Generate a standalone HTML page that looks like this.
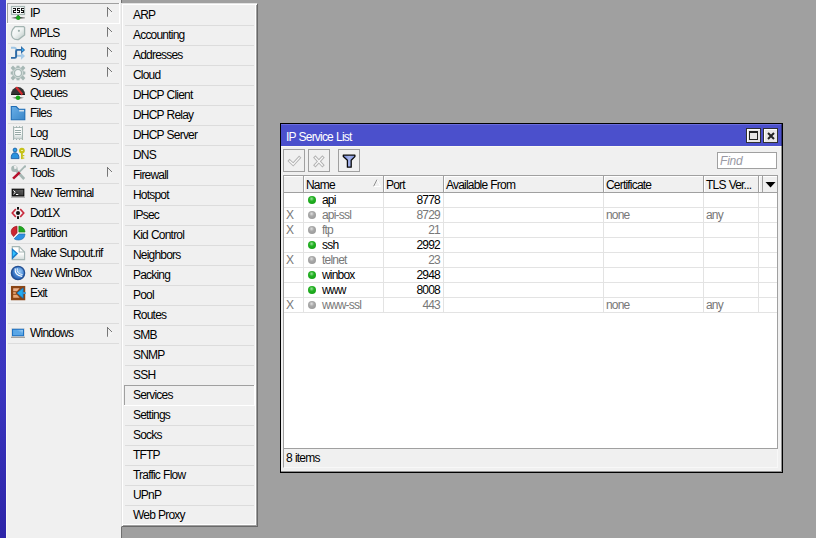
<!DOCTYPE html>
<html><head><meta charset="utf-8">
<style>
*{margin:0;padding:0;box-sizing:border-box}
html,body{width:816px;height:538px;overflow:hidden;background:#a0a0a0;font-family:"Liberation Sans",sans-serif;font-size:12px;line-height:14px;color:#000}
div,span{position:absolute}
.t{white-space:nowrap;letter-spacing:-0.8px;word-spacing:0.5px}
svg{position:absolute;display:block}
</style></head><body>

<div style="left:0;top:0;width:6px;height:538px;background:linear-gradient(#4444ca 0%,#3e3ac4 35%,#3a35bf 72%,#2c24a8 100%)"></div>
<div style="left:6px;top:0;width:115px;height:538px;background:#f0f0f0;border-left:1px solid #fafafa"></div>
<div style="left:8px;top:23px;width:111px;height:1px;background:#dcdcdc"></div>
<div style="left:8px;top:43px;width:111px;height:1px;background:#dcdcdc"></div>
<div style="left:8px;top:63px;width:111px;height:1px;background:#dcdcdc"></div>
<div style="left:8px;top:83px;width:111px;height:1px;background:#dcdcdc"></div>
<div style="left:8px;top:103px;width:111px;height:1px;background:#dcdcdc"></div>
<div style="left:8px;top:123px;width:111px;height:1px;background:#dcdcdc"></div>
<div style="left:8px;top:143px;width:111px;height:1px;background:#dcdcdc"></div>
<div style="left:8px;top:163px;width:111px;height:1px;background:#dcdcdc"></div>
<div style="left:8px;top:183px;width:111px;height:1px;background:#dcdcdc"></div>
<div style="left:8px;top:203px;width:111px;height:1px;background:#dcdcdc"></div>
<div style="left:8px;top:223px;width:111px;height:1px;background:#dcdcdc"></div>
<div style="left:8px;top:243px;width:111px;height:1px;background:#dcdcdc"></div>
<div style="left:8px;top:263px;width:111px;height:1px;background:#dcdcdc"></div>
<div style="left:8px;top:283px;width:111px;height:1px;background:#dcdcdc"></div>
<div style="left:8px;top:303px;width:111px;height:1px;background:#dcdcdc"></div>
<div style="left:8px;top:323px;width:111px;height:1px;background:#dcdcdc"></div>
<div style="left:8px;top:343px;width:111px;height:1px;background:#dcdcdc"></div>
<div style="left:7px;top:3px;width:113px;height:21px;background:#f0f0f0"></div><div style="left:7px;top:3px;width:112px;height:1px;background:#a0a0a0"></div><div style="left:7px;top:3px;width:1px;height:20px;background:#a0a0a0"></div><div style="left:119px;top:3px;width:1px;height:21px;background:#fff"></div><div style="left:7px;top:23px;width:113px;height:1px;background:#fff"></div>
<div style="left:10px;top:5px;width:16px;height:16px"><svg width="16" height="16" viewBox="0 0 16 16"><defs><linearGradient id="ipb" x1="0" x2="1"><stop offset="0" stop-color="#000" stop-opacity="0"/><stop offset=".5" stop-color="#111"/><stop offset="1" stop-color="#000" stop-opacity=".2"/></linearGradient></defs><rect x="1.5" y="1.5" width="13" height="8" fill="#f4f7f6" stroke="#a6b6b3" stroke-width="1.2"/><g fill="#111"><rect x="3" y="3" width="1" height="1"/><rect x="4" y="3" width="1" height="1"/><rect x="5" y="3" width="1" height="1"/><rect x="5" y="4" width="1" height="1"/><rect x="3" y="5" width="1" height="1"/><rect x="4" y="5" width="1" height="1"/><rect x="5" y="5" width="1" height="1"/><rect x="3" y="6" width="1" height="1"/><rect x="3" y="7" width="1" height="1"/><rect x="4" y="7" width="1" height="1"/><rect x="5" y="7" width="1" height="1"/><rect x="7" y="3" width="1" height="1"/><rect x="8" y="3" width="1" height="1"/><rect x="9" y="3" width="1" height="1"/><rect x="7" y="4" width="1" height="1"/><rect x="7" y="5" width="1" height="1"/><rect x="8" y="5" width="1" height="1"/><rect x="9" y="5" width="1" height="1"/><rect x="9" y="6" width="1" height="1"/><rect x="7" y="7" width="1" height="1"/><rect x="8" y="7" width="1" height="1"/><rect x="9" y="7" width="1" height="1"/><rect x="11" y="3" width="1" height="1"/><rect x="12" y="3" width="1" height="1"/><rect x="13" y="3" width="1" height="1"/><rect x="11" y="4" width="1" height="1"/><rect x="11" y="5" width="1" height="1"/><rect x="12" y="5" width="1" height="1"/><rect x="13" y="5" width="1" height="1"/><rect x="13" y="6" width="1" height="1"/><rect x="11" y="7" width="1" height="1"/><rect x="12" y="7" width="1" height="1"/><rect x="13" y="7" width="1" height="1"/></g><rect x="1" y="12" width="14" height="1.6" fill="url(#ipb)"/><rect x="7.5" y="10" width="1.2" height="1.5" fill="#111"/><circle cx="8.2" cy="12.8" r="2.2" fill="#18a418"/></svg></div>
<span class="t" style="left:30px;top:6px">IP</span>
<div style="left:107px;top:7px;width:7px;height:12px"><svg width="7" height="12" viewBox="0 0 7 12"><rect x="0" y="0" width="1" height="10" fill="#777"/><path d="M0.5 0.5 L5 5" stroke="#777" stroke-width="1"/><path d="M5 5.5 L1 9.5" stroke="#fff" stroke-width="1"/></svg></div>
<div style="left:10px;top:25px;width:16px;height:16px"><svg width="16" height="16" viewBox="0 0 16 16"><defs><linearGradient id="mpg" x1="0" y1="0" x2="1" y2="1"><stop offset="0" stop-color="#fff"/><stop offset=".5" stop-color="#eef2f1"/><stop offset="1" stop-color="#b4c2c0"/></linearGradient></defs><path d="M5.2 1.6 H13.6 L14.6 2.6 V10 L8.5 14.6 Q5 15.2 2.6 12.6 Q0.8 10.2 1.6 7.2 Q2.4 4.2 5.2 1.6Z" fill="url(#mpg)" stroke="#a3b4b1" stroke-width="1.3"/><circle cx="8.9" cy="5.8" r="1.1" fill="#9fb0ad"/></svg></div>
<span class="t" style="left:30px;top:26px">MPLS</span>
<div style="left:107px;top:27px;width:7px;height:12px"><svg width="7" height="12" viewBox="0 0 7 12"><rect x="0" y="0" width="1" height="10" fill="#777"/><path d="M0.5 0.5 L5 5" stroke="#777" stroke-width="1"/><path d="M5 5.5 L1 9.5" stroke="#fff" stroke-width="1"/></svg></div>
<div style="left:10px;top:45px;width:16px;height:16px"><svg width="16" height="16" viewBox="0 0 16 16"><path d="M1 2.8 H4.5 Q6 2.8 6.2 4.5 V10" fill="none" stroke="#9cc3e3" stroke-width="1.9"/><path d="M6.5 10.8 H11.5" stroke="#9cc3e3" stroke-width="1.9"/><path d="M11 7.2 L15 11 L11 14.8Z" fill="#a8cbe8"/><path d="M1 12.9 H4.8 Q6.1 12.9 6.1 11.5 V6.2 Q6.1 4.9 7.4 4.9 H11.5" fill="none" stroke="#2f6aa5" stroke-width="1.9"/><path d="M11 0.9 L15.1 4.9 L11 8.8Z" fill="#346fa9"/><rect x="12" y="3.8" width="1.3" height="2.2" fill="#2fb2ff"/></svg></div>
<span class="t" style="left:30px;top:46px">Routing</span>
<div style="left:107px;top:47px;width:7px;height:12px"><svg width="7" height="12" viewBox="0 0 7 12"><rect x="0" y="0" width="1" height="10" fill="#777"/><path d="M0.5 0.5 L5 5" stroke="#777" stroke-width="1"/><path d="M5 5.5 L1 9.5" stroke="#fff" stroke-width="1"/></svg></div>
<div style="left:10px;top:65px;width:16px;height:16px"><svg width="16" height="16" viewBox="0 0 16 16"><g fill="#a7b8b5"><rect x="6.5" y="0.7000000000000002" width="3" height="3"/><rect x="6.5" y="12.3" width="3" height="3"/><rect x="0.7000000000000002" y="6.5" width="3" height="3"/><rect x="12.3" y="6.5" width="3" height="3"/><rect x="1.3" y="1.3" width="3.4" height="3.4" transform="rotate(45 3 3)"/><rect x="11.3" y="1.3" width="3.4" height="3.4" transform="rotate(45 13 3)"/><rect x="1.3" y="11.3" width="3.4" height="3.4" transform="rotate(45 3 13)"/><rect x="11.3" y="11.3" width="3.4" height="3.4" transform="rotate(45 13 13)"/><circle cx="8" cy="8" r="5.9"/></g><circle cx="8" cy="8" r="4.7" fill="none" stroke="#dfe6e5" stroke-width=".8"/><circle cx="8" cy="8" r="2.9" fill="#f2f5f5"/></svg></div>
<span class="t" style="left:30px;top:66px">System</span>
<div style="left:107px;top:67px;width:7px;height:12px"><svg width="7" height="12" viewBox="0 0 7 12"><rect x="0" y="0" width="1" height="10" fill="#777"/><path d="M0.5 0.5 L5 5" stroke="#777" stroke-width="1"/><path d="M5 5.5 L1 9.5" stroke="#fff" stroke-width="1"/></svg></div>
<div style="left:10px;top:85px;width:16px;height:16px"><svg width="16" height="16" viewBox="0 0 16 16"><defs><radialGradient id="qsh"><stop offset="0" stop-color="#000" stop-opacity=".85"/><stop offset="1" stop-color="#000" stop-opacity="0"/></radialGradient></defs><path d="M1 9.6 A7 7.6 0 0 1 15 9.6Z" fill="#343434"/><rect x="1" y="9" width="14" height="0.8" fill="#000"/><path d="M5.2 2.8 L7 1.6 L13 8.5 L11.8 10.6Z" fill="#d42a2e"/><ellipse cx="8" cy="12.8" rx="6.5" ry="1.4" fill="url(#qsh)"/><circle cx="8" cy="12.8" r="2.2" fill="#16a816"/></svg></div>
<span class="t" style="left:30px;top:86px">Queues</span>
<div style="left:10px;top:105px;width:16px;height:16px"><svg width="16" height="16" viewBox="0 0 16 16"><defs><linearGradient id="fg" x1="0" y1="0" x2="1" y2="1"><stop offset="0" stop-color="#6ab0e8"/><stop offset="1" stop-color="#3a86c8"/></linearGradient></defs><path d="M1.3 1.5 H6.2 L8.8 4.2 H14.8 V14.8 H1.3Z" fill="url(#fg)" stroke="#1f6db5" stroke-width="1.1"/><rect x="9.2" y="5.2" width="4.8" height="1.2" fill="#f2f2f2"/></svg></div>
<span class="t" style="left:30px;top:106px">Files</span>
<div style="left:10px;top:125px;width:16px;height:16px"><svg width="16" height="16" viewBox="0 0 16 16"><defs><linearGradient id="lg" x1="0" y1="0" x2="0" y2="1"><stop offset=".55" stop-color="#fbfcfc"/><stop offset="1" stop-color="#c9d3d2"/></linearGradient></defs><rect x="3" y="1.2" width="10" height="13.8" fill="#a3b3b1"/><rect x="4.2" y="3" width="7.7" height="10.6" fill="url(#lg)"/><g fill="#f0f0f0"><rect x="4" y="1" width="2" height="1.1"/><rect x="7" y="1" width="2" height="1.1"/><rect x="10" y="1" width="2" height="1.1"/><rect x="4" y="14.1" width="2" height="1.1"/><rect x="7" y="14.1" width="2" height="1.1"/><rect x="10" y="14.1" width="2" height="1.1"/></g><rect x="5" y="5" width="6" height="1" fill="#97a9a6"/><rect x="5" y="7" width="6" height="1" fill="#97a9a6"/><rect x="5" y="9" width="6" height="1" fill="#97a9a6"/></svg></div>
<span class="t" style="left:30px;top:126px">Log</span>
<div style="left:10px;top:145px;width:16px;height:16px"><svg width="16" height="16" viewBox="0 0 16 16"><circle cx="5" cy="5" r="1.9" fill="#2b9fe6" stroke="#1d5fa6" stroke-width="0.9"/><path d="M1.2 13.6 Q1 7.8 5 7.8 Q9 7.8 9 13.6Z" fill="#2a92de" stroke="#1d5fa6" stroke-width="0.9"/><circle cx="11.9" cy="5.6" r="2.9" fill="#c6c21a"/><rect x="11" y="7.5" width="1.8" height="6.6" fill="#c6c21a"/><rect x="12.5" y="10" width="1.8" height="1.2" fill="#c6c21a"/><rect x="12.5" y="12.5" width="1.8" height="1.2" fill="#c6c21a"/><rect x="11" y="5" width="2" height="1" fill="#f0ee9c"/></svg></div>
<span class="t" style="left:30px;top:146px">RADIUS</span>
<div style="left:10px;top:165px;width:16px;height:16px"><svg width="16" height="16" viewBox="0 0 16 16"><path d="M14.6 1.6 L8.5 7.8" stroke="#a6b7b4" stroke-width="1.8"/><circle cx="15" cy="1.4" r="1.1" fill="#a6b7b4"/><path d="M5.5 4.5 L14.2 14" stroke="#a6b7b4" stroke-width="2.6"/><circle cx="4.4" cy="3.8" r="3.2" fill="#a6b7b4"/><path d="M3.8 1 L6.6 1 L6.6 3.5 L4.5 4.2Z" fill="#f0f0f0"/><path d="M2.2 12.8 L8.8 6.5 L10.6 8.3 L4 14.6Z" fill="#b5102c"/></svg></div>
<span class="t" style="left:30px;top:166px">Tools</span>
<div style="left:107px;top:167px;width:7px;height:12px"><svg width="7" height="12" viewBox="0 0 7 12"><rect x="0" y="0" width="1" height="10" fill="#777"/><path d="M0.5 0.5 L5 5" stroke="#777" stroke-width="1"/><path d="M5 5.5 L1 9.5" stroke="#fff" stroke-width="1"/></svg></div>
<div style="left:10px;top:185px;width:16px;height:16px"><svg width="16" height="16" viewBox="0 0 16 16"><defs><linearGradient id="tg" x1="0" x2="1" y1="1" y2="0"><stop offset="0" stop-color="#1a1a1a"/><stop offset="1" stop-color="#6a6a6a"/></linearGradient></defs><rect x="1" y="3" width="14" height="9.8" fill="#e2e2e2"/><rect x="2.2" y="4.2" width="11.6" height="6.8" fill="url(#tg)" stroke="#000" stroke-width="1"/><path d="M3.4 5.4 L5.3 7.3 L3.4 9.2" fill="none" stroke="#fff" stroke-width="1"/><rect x="6" y="9" width="2.3" height="1" fill="#fff"/><rect x="1" y="11.9" width="14" height="1" fill="#b0b0b0"/></svg></div>
<span class="t" style="left:30px;top:186px">New Terminal</span>
<div style="left:10px;top:205px;width:16px;height:16px"><svg width="16" height="16" viewBox="0 0 16 16"><path d="M5.8 4 L2.3 8 L5.8 12" fill="none" stroke="#c82a3c" stroke-width="1.7"/><path d="M10.2 4 L13.7 8 L10.2 12" fill="none" stroke="#c82a3c" stroke-width="1.7"/><circle cx="8" cy="8" r="2" fill="#111"/><rect x="7" y="2" width="2" height="2.6" fill="#111"/><rect x="7" y="11.2" width="2" height="2.8" fill="#111"/></svg></div>
<span class="t" style="left:30px;top:206px">Dot1X</span>
<div style="left:10px;top:225px;width:16px;height:16px"><svg width="16" height="16" viewBox="0 0 16 16"><path d="M7 1.2 V7.8 L3.6 11.6 Q0.8 9 1.2 6 Q1.8 2 7 1.2Z" fill="#cc2630" stroke="#a3101c" stroke-width=".7"/><path d="M8.9 1.2 Q14.5 1.8 15 7 H8.9Z" fill="#22a822" stroke="#158515" stroke-width=".7"/><path d="M15 9 Q14.6 14.8 8.6 15 Q5.8 15 4.2 13.8 L9 9Z" fill="#2e90e2" stroke="#1f6cb2" stroke-width=".7"/></svg></div>
<span class="t" style="left:30px;top:226px">Partition</span>
<div style="left:10px;top:245px;width:16px;height:16px"><svg width="16" height="16" viewBox="0 0 16 16"><defs><linearGradient id="sg" x1="0" y1="0" x2="0" y2="1"><stop offset=".5" stop-color="#fff"/><stop offset="1" stop-color="#d2dbda"/></linearGradient></defs><path d="M2.3 1.6 H9.2 L14.6 7 V14.6 H2.3Z" fill="url(#sg)" stroke="#a6b6b4" stroke-width="1.1"/><path d="M9.2 1.6 V7 H14.6" fill="none" stroke="#a6b6b4" stroke-width="1.1"/><path d="M1.8 3 L8.2 8.6 L1.8 14.8Z" fill="#1a7cc8"/><path d="M2.8 5.6 L6 8.6 L2.8 11.6Z" fill="#30c2ff"/></svg></div>
<span class="t" style="left:30px;top:246px">Make Supout.rif</span>
<div style="left:10px;top:265px;width:16px;height:16px"><svg width="16" height="16" viewBox="0 0 16 16"><defs><radialGradient id="wg" cx=".62" cy=".38" r=".62"><stop offset="0" stop-color="#9ccaf4"/><stop offset=".55" stop-color="#4a8ad6"/><stop offset="1" stop-color="#2a5fae"/></radialGradient></defs><circle cx="8" cy="8" r="6.6" fill="url(#wg)" stroke="#234f92" stroke-width="1.4"/><path d="M5.2 3.4 Q4.2 10.4 12.2 11.4" fill="none" stroke="#fff" stroke-width="1.1"/><path d="M7.2 3.2 Q6.4 8.8 12.6 9.6" fill="none" stroke="#fff" stroke-width=".9"/></svg></div>
<span class="t" style="left:30px;top:266px">New WinBox</span>
<div style="left:10px;top:285px;width:16px;height:16px"><svg width="16" height="16" viewBox="0 0 16 16"><rect x="1.6" y="1.6" width="13" height="13" fill="#8a4514" stroke="#8a4514" stroke-width="1.3"/><path d="M3.2 3.2 H9.6 L7 6.2 H3.2Z" fill="#eab08a"/><path d="M3.2 12.8 H9.6 L7 9.8 H3.2Z" fill="#e8a878"/><rect x="3.2" y="7" width="2.6" height="2" fill="#dc9a68"/><path d="M13.2 2.8 L6.8 8 L13.2 13.4Z" fill="#22aaf0" stroke="#1a66aa" stroke-width=".7"/><rect x="13" y="7.2" width="3" height="1.7" fill="#3a9ee0"/></svg></div>
<span class="t" style="left:30px;top:286px">Exit</span>
<div style="left:10px;top:325px;width:16px;height:16px"><svg width="16" height="16" viewBox="0 0 16 16"><defs><linearGradient id="wng" x1="0" y1="1" x2="1" y2="0"><stop offset=".6" stop-color="#5aa6e6"/><stop offset="1" stop-color="#c0e0fa"/></linearGradient></defs><rect x="1" y="3" width="14" height="9.8" fill="#e4e0dc"/><rect x="2.5" y="4.3" width="11" height="6.4" fill="url(#wng)" stroke="#1f73c4" stroke-width="1.1"/><rect x="1" y="11.8" width="14" height="1.1" fill="#9c9c9c"/></svg></div>
<span class="t" style="left:30px;top:326px">Windows</span>
<div style="left:107px;top:327px;width:7px;height:12px"><svg width="7" height="12" viewBox="0 0 7 12"><rect x="0" y="0" width="1" height="10" fill="#777"/><path d="M0.5 0.5 L5 5" stroke="#777" stroke-width="1"/><path d="M5 5.5 L1 9.5" stroke="#fff" stroke-width="1"/></svg></div>
<div style="left:121px;top:0;width:1px;height:538px;background:#707070"></div>
<div style="left:121px;top:3px;width:137px;height:524px;background:#f0f0f0;border-left:1px solid #e3e3e3;border-top:1px solid #e3e3e3;border-right:1px solid #696969;border-bottom:1px solid #696969;box-shadow:inset 1px 1px 0 #fff,inset -1px -1px 0 #a0a0a0,inset -2px -2px 0 #fff"></div>
<div style="left:125px;top:25px;width:129px;height:1px;background:#dcdcdc"></div>
<div style="left:125px;top:45px;width:129px;height:1px;background:#dcdcdc"></div>
<div style="left:125px;top:65px;width:129px;height:1px;background:#dcdcdc"></div>
<div style="left:125px;top:85px;width:129px;height:1px;background:#dcdcdc"></div>
<div style="left:125px;top:105px;width:129px;height:1px;background:#dcdcdc"></div>
<div style="left:125px;top:125px;width:129px;height:1px;background:#dcdcdc"></div>
<div style="left:125px;top:145px;width:129px;height:1px;background:#dcdcdc"></div>
<div style="left:125px;top:165px;width:129px;height:1px;background:#dcdcdc"></div>
<div style="left:125px;top:185px;width:129px;height:1px;background:#dcdcdc"></div>
<div style="left:125px;top:205px;width:129px;height:1px;background:#dcdcdc"></div>
<div style="left:125px;top:225px;width:129px;height:1px;background:#dcdcdc"></div>
<div style="left:125px;top:245px;width:129px;height:1px;background:#dcdcdc"></div>
<div style="left:125px;top:265px;width:129px;height:1px;background:#dcdcdc"></div>
<div style="left:125px;top:285px;width:129px;height:1px;background:#dcdcdc"></div>
<div style="left:125px;top:305px;width:129px;height:1px;background:#dcdcdc"></div>
<div style="left:125px;top:325px;width:129px;height:1px;background:#dcdcdc"></div>
<div style="left:125px;top:345px;width:129px;height:1px;background:#dcdcdc"></div>
<div style="left:125px;top:365px;width:129px;height:1px;background:#dcdcdc"></div>
<div style="left:125px;top:385px;width:129px;height:1px;background:#dcdcdc"></div>
<div style="left:125px;top:405px;width:129px;height:1px;background:#dcdcdc"></div>
<div style="left:125px;top:425px;width:129px;height:1px;background:#dcdcdc"></div>
<div style="left:125px;top:445px;width:129px;height:1px;background:#dcdcdc"></div>
<div style="left:125px;top:465px;width:129px;height:1px;background:#dcdcdc"></div>
<div style="left:125px;top:485px;width:129px;height:1px;background:#dcdcdc"></div>
<div style="left:125px;top:505px;width:129px;height:1px;background:#dcdcdc"></div>
<div style="left:124px;top:385px;width:131px;height:21px;background:#f0f0f0"></div><div style="left:124px;top:385px;width:130px;height:1px;background:#a0a0a0"></div><div style="left:124px;top:385px;width:1px;height:20px;background:#a0a0a0"></div><div style="left:254px;top:385px;width:1px;height:21px;background:#fff"></div><div style="left:124px;top:405px;width:131px;height:1px;background:#fff"></div>
<span class="t" style="left:133px;top:8px">ARP</span>
<span class="t" style="left:133px;top:28px">Accounting</span>
<span class="t" style="left:133px;top:48px">Addresses</span>
<span class="t" style="left:133px;top:68px">Cloud</span>
<span class="t" style="left:133px;top:88px">DHCP Client</span>
<span class="t" style="left:133px;top:108px">DHCP Relay</span>
<span class="t" style="left:133px;top:128px">DHCP Server</span>
<span class="t" style="left:133px;top:148px">DNS</span>
<span class="t" style="left:133px;top:168px">Firewall</span>
<span class="t" style="left:133px;top:188px">Hotspot</span>
<span class="t" style="left:133px;top:208px">IPsec</span>
<span class="t" style="left:133px;top:228px">Kid Control</span>
<span class="t" style="left:133px;top:248px">Neighbors</span>
<span class="t" style="left:133px;top:268px">Packing</span>
<span class="t" style="left:133px;top:288px">Pool</span>
<span class="t" style="left:133px;top:308px">Routes</span>
<span class="t" style="left:133px;top:328px">SMB</span>
<span class="t" style="left:133px;top:348px">SNMP</span>
<span class="t" style="left:133px;top:368px">SSH</span>
<span class="t" style="left:133px;top:388px">Services</span>
<span class="t" style="left:133px;top:408px">Settings</span>
<span class="t" style="left:133px;top:428px">Socks</span>
<span class="t" style="left:133px;top:448px">TFTP</span>
<span class="t" style="left:133px;top:468px">Traffic Flow</span>
<span class="t" style="left:133px;top:488px">UPnP</span>
<span class="t" style="left:133px;top:508px">Web Proxy</span>
<div style="left:280px;top:123px;width:503px;height:350px;background:#000"></div>
<div style="left:281px;top:124px;width:501px;height:22px;background:#4b50cc;border-top:1px solid #6a6cdc"></div>
<div style="left:281px;top:146px;width:501px;height:326px;background:#f0f0f0;border-top:1px solid #fafaf2"></div>
<span class="t" style="left:286px;top:130px;color:#fff">IP Service List</span>
<div style="left:781px;top:124px;width:1px;height:348px;background:rgba(0,0,0,.4)"></div>
<div style="left:281px;top:471px;width:500px;height:1px;background:rgba(0,0,0,.4)"></div>
<div style="left:746px;top:128px;width:15px;height:15px;background:#e8e6e6;border:1px solid #303030;box-shadow:inset 1px 1px 0 #fff"><div style="left:2px;top:2px;width:9px;height:9px;border:1px solid #222;border-top-width:2px"></div></div>
<div style="left:763px;top:128px;width:15px;height:15px;background:#e8e6e6;border:1px solid #303030;box-shadow:inset 1px 1px 0 #fff"><svg style="left:3px;top:3px" width="8" height="8" viewBox="0 0 8 8"><path d="M1 1 L7 7 M7 1 L1 7" stroke="#222" stroke-width="2"/></svg></div>
<div style="left:283px;top:149px;width:22px;height:23px;border:1px solid #a0a0a0;background:#f0f0f0"><svg style="left:-1px;top:-1px" width="22" height="23" viewBox="0 0 22 23"><path d="M6.6 12 L10.2 15.3 L16.2 8.8" fill="none" stroke="#b4b4b4" stroke-width="3.1" stroke-linecap="square"/><path d="M6.6 12 L10.2 15.3 L16.2 8.8" fill="none" stroke="#fafafa" stroke-width="1.2" stroke-linecap="square"/></svg></div>
<div style="left:308px;top:149px;width:22px;height:23px;border:1px solid #a0a0a0;background:#f0f0f0"><svg style="left:-1px;top:-1px" width="22" height="23" viewBox="0 0 22 23"><path d="M7.4 8.6 L14.4 16.2 M14.4 8.6 L7.4 16.2" stroke="#b4b4b4" stroke-width="3.3" stroke-linecap="square"/><path d="M7.4 8.6 L14.4 16.2 M14.4 8.6 L7.4 16.2" stroke="#fafafa" stroke-width="1.3" stroke-linecap="square"/></svg></div>
<div style="left:338px;top:149px;width:22px;height:23px;border:1px solid #a0a0a0;background:#f0f0f0"><svg style="left:-1px;top:-1px" width="22" height="23" viewBox="0 0 22 23"><defs><linearGradient id="flg" x1="0" x2="1"><stop offset="0" stop-color="#6f86d8"/><stop offset=".5" stop-color="#a8b6ee"/><stop offset="1" stop-color="#7a8edc"/></linearGradient></defs><path d="M5.3 6.2 H16.9 V7.6 L13.2 11.2 V18.2 H9.4 V11.2 L5.3 7.6Z" fill="url(#flg)" stroke="#0a0a0a" stroke-width="1.3" stroke-linejoin="round"/></svg></div>
<div style="left:717px;top:152px;width:60px;height:17px;border:1px solid #a0a0a0;background:#fff"></div>
<span class="t" style="left:720px;top:154px;color:#9a9aa4;font-style:italic;letter-spacing:-0.2px">Find</span>
<div style="left:283px;top:175px;width:495px;height:274px;border:1px solid #a0a0a0;background:#fff"></div>
<div style="left:284px;top:176px;width:493px;height:16px;background:#f0f0f0"></div>
<div style="left:284px;top:192px;width:493px;height:1px;background:#a0a0a0"></div>
<div style="left:284px;top:176px;width:493px;height:1px;background:#fff"></div>
<div style="left:303px;top:176px;width:1px;height:16px;background:#a0a0a0"></div>
<div style="left:304px;top:176px;width:1px;height:16px;background:#fff"></div>
<div style="left:303px;top:193px;width:1px;height:120px;background:#e3e3e3"></div>
<div style="left:383px;top:176px;width:1px;height:16px;background:#a0a0a0"></div>
<div style="left:384px;top:176px;width:1px;height:16px;background:#fff"></div>
<div style="left:383px;top:193px;width:1px;height:120px;background:#e3e3e3"></div>
<div style="left:443px;top:176px;width:1px;height:16px;background:#a0a0a0"></div>
<div style="left:444px;top:176px;width:1px;height:16px;background:#fff"></div>
<div style="left:443px;top:193px;width:1px;height:120px;background:#e3e3e3"></div>
<div style="left:603px;top:176px;width:1px;height:16px;background:#a0a0a0"></div>
<div style="left:604px;top:176px;width:1px;height:16px;background:#fff"></div>
<div style="left:603px;top:193px;width:1px;height:120px;background:#e3e3e3"></div>
<div style="left:703px;top:176px;width:1px;height:16px;background:#a0a0a0"></div>
<div style="left:704px;top:176px;width:1px;height:16px;background:#fff"></div>
<div style="left:703px;top:193px;width:1px;height:120px;background:#e3e3e3"></div>
<div style="left:758px;top:176px;width:1px;height:16px;background:#a0a0a0"></div>
<div style="left:759px;top:176px;width:1px;height:16px;background:#fff"></div>
<div style="left:758px;top:193px;width:1px;height:120px;background:#e3e3e3"></div>
<div style="left:762px;top:176px;width:1px;height:16px;background:#a0a0a0"></div>
<svg style="left:765px;top:182px" width="11" height="7" viewBox="0 0 11 7"><path d="M0.5 0 H10.5 L5.5 5.5Z" fill="#000"/></svg>
<svg style="left:373px;top:179px" width="8" height="8" viewBox="0 0 8 8"><path d="M4 0.5 L0.5 7.5" stroke="#909090" stroke-width="1"/><path d="M4 0.5 L7.5 7.5 H0.5" fill="none" stroke="#fff" stroke-width="1"/></svg>
<span class="t" style="left:306px;top:178px">Name</span>
<span class="t" style="left:386px;top:178px">Port</span>
<span class="t" style="left:446px;top:178px">Available From</span>
<span class="t" style="left:606px;top:178px">Certificate</span>
<span class="t" style="left:706px;top:178px">TLS Ver...</span>
<div style="left:284px;top:207px;width:493px;height:1px;background:#e3e3e3"></div>
<div style="left:308px;top:196px;width:8px;height:8px;border-radius:50%;background:radial-gradient(circle at 45% 35%,#9be09b 0,#22b022 35%,#129a12 100%)"></div>
<span class="t" style="left:322px;top:193px;color:#000">api</span>
<span class="t" style="left:340px;width:100px;text-align:right;top:193px;color:#000">8778</span>
<div style="left:284px;top:222px;width:493px;height:1px;background:#e3e3e3"></div>
<div style="left:308px;top:211px;width:8px;height:8px;border-radius:50%;background:radial-gradient(circle at 45% 35%,#e0e0e0 0,#a8a8a8 35%,#939393 100%)"></div>
<span class="t" style="left:286px;top:208px;color:#787878">X</span>
<span class="t" style="left:322px;top:208px;color:#787878">api-ssl</span>
<span class="t" style="left:340px;width:100px;text-align:right;top:208px;color:#787878">8729</span>
<span class="t" style="left:606px;top:208px;color:#787878">none</span>
<span class="t" style="left:706px;top:208px;color:#787878">any</span>
<div style="left:284px;top:237px;width:493px;height:1px;background:#e3e3e3"></div>
<div style="left:308px;top:226px;width:8px;height:8px;border-radius:50%;background:radial-gradient(circle at 45% 35%,#e0e0e0 0,#a8a8a8 35%,#939393 100%)"></div>
<span class="t" style="left:286px;top:223px;color:#787878">X</span>
<span class="t" style="left:322px;top:223px;color:#787878">ftp</span>
<span class="t" style="left:340px;width:100px;text-align:right;top:223px;color:#787878">21</span>
<div style="left:284px;top:252px;width:493px;height:1px;background:#e3e3e3"></div>
<div style="left:308px;top:241px;width:8px;height:8px;border-radius:50%;background:radial-gradient(circle at 45% 35%,#9be09b 0,#22b022 35%,#129a12 100%)"></div>
<span class="t" style="left:322px;top:238px;color:#000">ssh</span>
<span class="t" style="left:340px;width:100px;text-align:right;top:238px;color:#000">2992</span>
<div style="left:284px;top:267px;width:493px;height:1px;background:#e3e3e3"></div>
<div style="left:308px;top:256px;width:8px;height:8px;border-radius:50%;background:radial-gradient(circle at 45% 35%,#e0e0e0 0,#a8a8a8 35%,#939393 100%)"></div>
<span class="t" style="left:286px;top:253px;color:#787878">X</span>
<span class="t" style="left:322px;top:253px;color:#787878">telnet</span>
<span class="t" style="left:340px;width:100px;text-align:right;top:253px;color:#787878">23</span>
<div style="left:284px;top:282px;width:493px;height:1px;background:#e3e3e3"></div>
<div style="left:308px;top:271px;width:8px;height:8px;border-radius:50%;background:radial-gradient(circle at 45% 35%,#9be09b 0,#22b022 35%,#129a12 100%)"></div>
<span class="t" style="left:322px;top:268px;color:#000">winbox</span>
<span class="t" style="left:340px;width:100px;text-align:right;top:268px;color:#000">2948</span>
<div style="left:284px;top:297px;width:493px;height:1px;background:#e3e3e3"></div>
<div style="left:308px;top:286px;width:8px;height:8px;border-radius:50%;background:radial-gradient(circle at 45% 35%,#9be09b 0,#22b022 35%,#129a12 100%)"></div>
<span class="t" style="left:322px;top:283px;color:#000">www</span>
<span class="t" style="left:340px;width:100px;text-align:right;top:283px;color:#000">8008</span>
<div style="left:284px;top:312px;width:493px;height:1px;background:#e3e3e3"></div>
<div style="left:308px;top:301px;width:8px;height:8px;border-radius:50%;background:radial-gradient(circle at 45% 35%,#e0e0e0 0,#a8a8a8 35%,#939393 100%)"></div>
<span class="t" style="left:286px;top:298px;color:#787878">X</span>
<span class="t" style="left:322px;top:298px;color:#787878">www-ssl</span>
<span class="t" style="left:340px;width:100px;text-align:right;top:298px;color:#787878">443</span>
<span class="t" style="left:606px;top:298px;color:#787878">none</span>
<span class="t" style="left:706px;top:298px;color:#787878">any</span>
<div style="left:283px;top:449px;width:495px;height:19px;border-left:1px solid #a0a0a0;border-bottom:1px solid #f8f8f8;border-right:1px solid #f8f8f8"></div>
<span class="t" style="left:286px;top:451px">8 items</span>
</body></html>
